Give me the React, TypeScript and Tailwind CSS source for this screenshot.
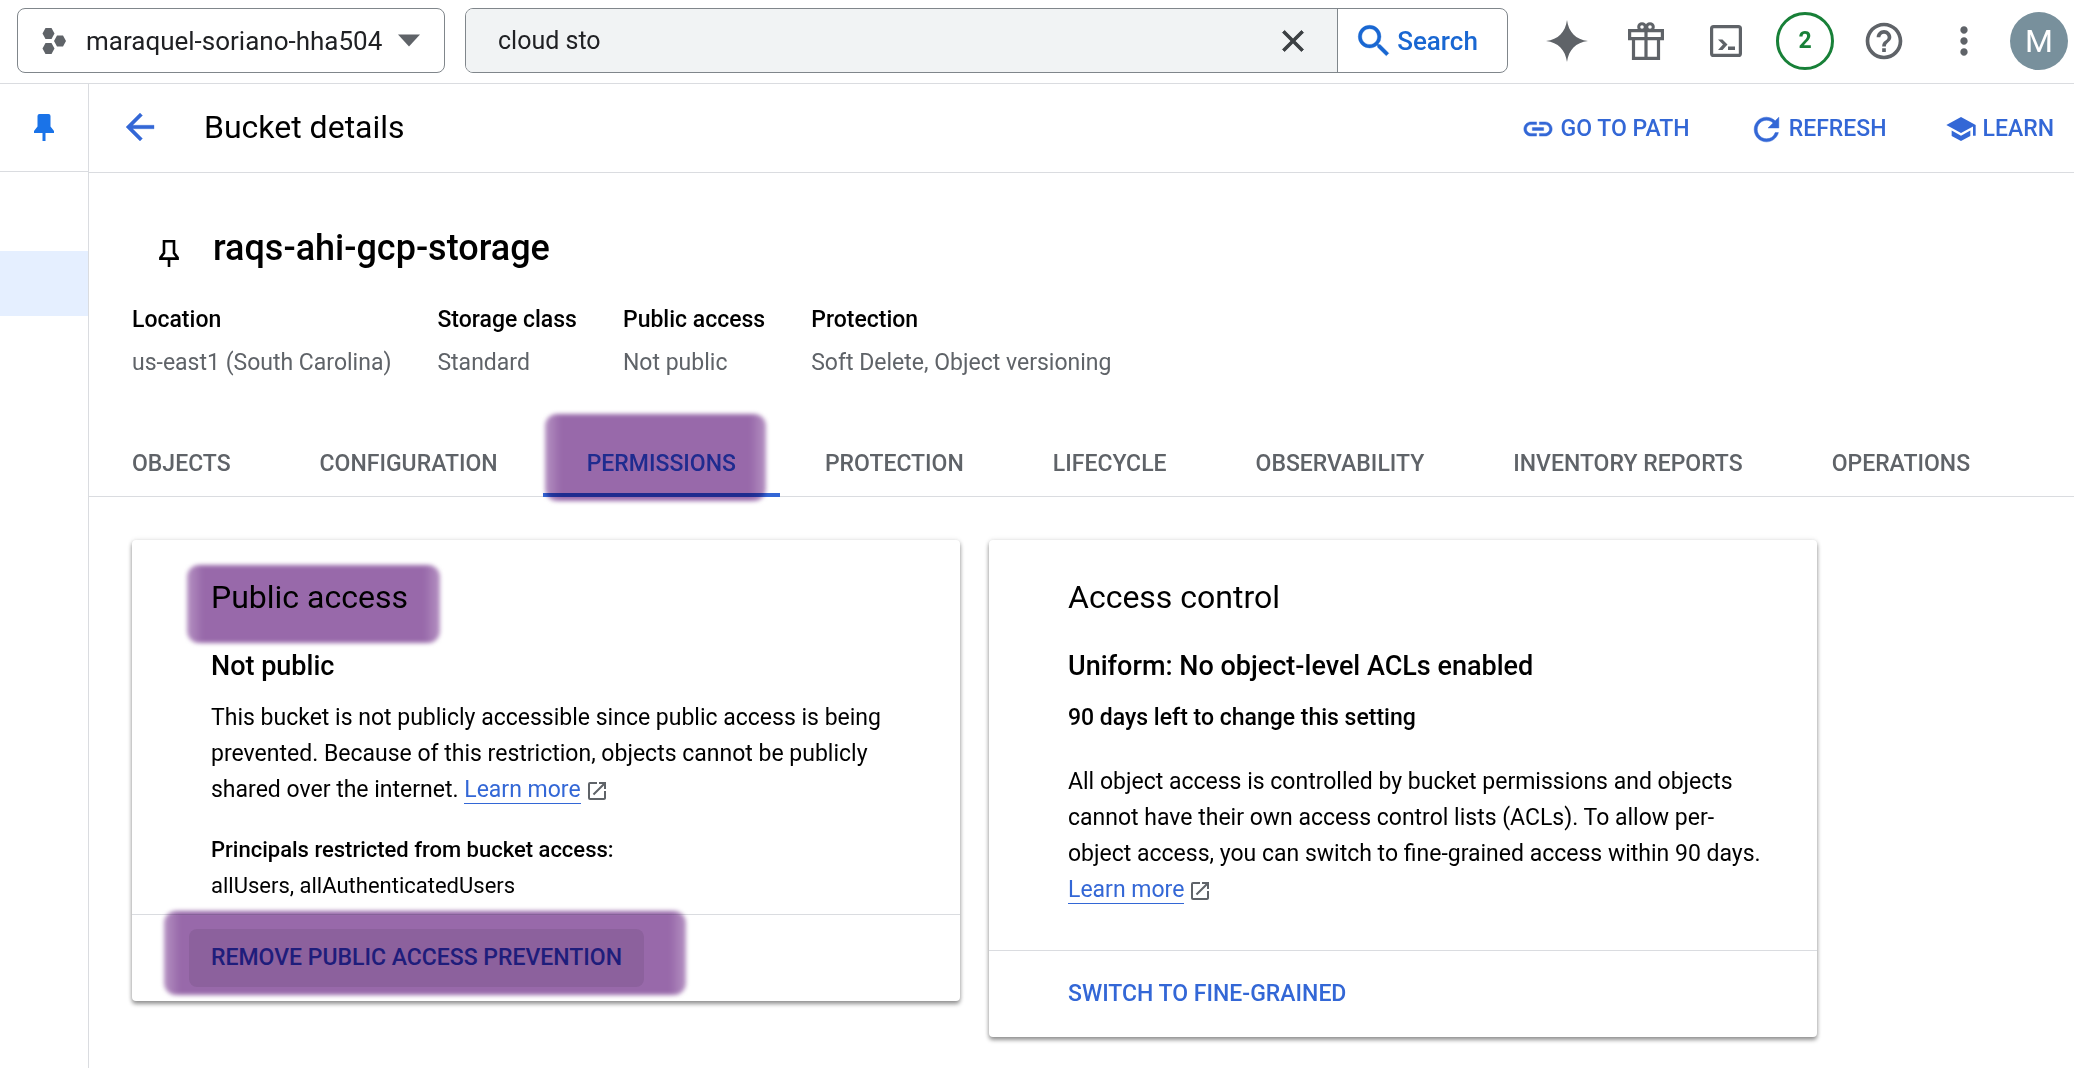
import React from "react";

type IconProps = { className?: string };

const PATHS = {
  back: "M20 11H7.83l5.59-5.59L12 4l-8 8 8 8 1.41-1.41L7.83 13H20v-2z",
  close: "M19 6.410 17.590 5 12 10.590 6.410 5 5 6.410 10.590 12 5 17.590 6.410 19 12 13.410 17.590 19 19 17.590 13.410 12z",
  search:
    "M15.500 14h-.79l-.28-.27A6.471 6.471 0 0 0 16 9.500 6.500 6.500 0 1 0 9.500 16c1.610 0 3.090-.59 4.230-1.570l.27.28v.79l5 4.990L20.490 19l-4.990-5zm-6 0C7.010 14 5 11.990 5 9.500S7.010 5 9.500 5 14 7.010 14 9.500 11.990 14 9.500 14z",
  spark: "M12 0C12.900 7 17 11.100 24 12 17 12.900 12.900 17 12 24 11.100 17 7 12.900 0 12 7 11.100 11.100 7 12 0z",
  help: "M11 18h2v-2h-2v2zm1-16C6.480 2 2 6.480 2 12s4.480 10 10 10 10-4.480 10-10S17.520 2 12 2zm0 18c-4.410 0-8-3.590-8-8s3.590-8 8-8 8 3.590 8 8-3.590 8-8 8zm0-14c-2.210 0-4 1.790-4 4h2c0-1.100.9-2 2-2s2 .9 2 2c0 2-3 1.750-3 5h2c0-2.250 3-2.500 3-5 0-2.210-1.790-4-4-4z",
  more: "M12 8c1.100 0 2-.9 2-2s-.9-2-2-2-2 .9-2 2 .9 2 2 2zm0 2c-1.100 0-2 .9-2 2s.9 2 2 2 2-.9 2-2-.9-2-2-2zm0 6c-1.100 0-2 .9-2 2s.9 2 2 2 2-.9 2-2-.9-2-2-2z",
  link: "M3.900 12c0-1.710 1.390-3.100 3.100-3.100h4V7H7c-2.760 0-5 2.240-5 5s2.240 5 5 5h4v-1.900H7c-1.710 0-3.100-1.390-3.100-3.100zM8 13h8v-2H8v2zm9-6h-4v1.900h4c1.710 0 3.100 1.390 3.100 3.100s-1.390 3.100-3.100 3.100h-4V17h4c2.760 0 5-2.240 5-5s-2.240-5-5-5z",
  refresh:
    "M17.650 6.350A7.958 7.958 0 0 0 12 4c-4.420 0-7.990 3.580-7.990 8s3.570 8 7.990 8c3.730 0 6.840-2.550 7.730-6h-2.080A5.990 5.990 0 0 1 12 18c-3.310 0-6-2.690-6-6s2.690-6 6-6c1.660 0 3.140.69 4.220 1.780L13 11h7V4l-2.350 2.350z",
  school: "M5 13.180v4L12 21l7-3.820v-4L12 17l-7-3.820zM12 3 1 9l11 6 9-4.910V17h2V9L12 3z",
  external:
    "M19 19H5V5h7V3H5a2 2 0 0 0-2 2v14a2 2 0 0 0 2 2h14c1.100 0 2-.9 2-2v-7h-2v7zM14 3v2h3.590l-9.830 9.830 1.410 1.410L19 6.410V10h2V3h-7z",
};

function Icon({ name, className }: IconProps & { name: keyof typeof PATHS }) {
  return (
    <svg viewBox="0 0 24 24" fill="currentColor" aria-hidden="true" className={className}>
      <path d={PATHS[name]} />
    </svg>
  );
}

function PinFilledIcon({ className }: IconProps) {
  return (
    <svg viewBox="0 0 20 27" fill="currentColor" aria-hidden="true" className={className}>
      <path d="M3.500 2q0-2 2-2h9q2 0 2 2v10.500l3.500 4.500v2h-8.500v8h-3v-8H0v-2l3.500-4.500z" />
    </svg>
  );
}

function PinOutlineIcon({ className }: IconProps) {
  return (
    <svg viewBox="0 0 20 27" fill="none" stroke="currentColor" strokeWidth="2.600" aria-hidden="true" className={className}>
      <path d="M5 1.300h10v11.800l3.600 4.500v1H1.400v-1L5 13.100zM10 18.500V27" />
    </svg>
  );
}

function ProjectIcon({ className }: IconProps) {
  return (
    <svg viewBox="0 0 24 26" fill="currentColor" aria-hidden="true" className={className}>
      <path d="M3.500 0h6L12.500 5.500 9.500 11h-6L.5 5.500zM15 7.500h6L24 13l-3 5.500h-6L12 13zM3.500 15h6l3 5.500-3 5.500h-6l-3-5.500z" />
    </svg>
  );
}

function GiftIcon({ className }: IconProps) {
  return (
    <svg viewBox="0 0 36 38" fill="none" stroke="currentColor" strokeWidth="3.200" aria-hidden="true" className={className}>
      <path d="M1.600 8.600h32.800v8H1.600zM5.500 16.600v19.800h25V16.600M18 8v28" />
      <circle cx="14" cy="5" r="3.300" strokeWidth="3" />
      <circle cx="22" cy="5" r="3.300" strokeWidth="3" />
    </svg>
  );
}

function ShellIcon({ className }: IconProps) {
  return (
    <svg viewBox="0 0 32 32" fill="none" stroke="currentColor" strokeWidth="3.200" aria-hidden="true" className={className}>
      <rect x="1.600" y="1.600" width="28.800" height="28.800" rx="2" />
      <path d="M8 14.500h4.500l5 5-5 5.500H8l5-5.500zM18 21.500h7v3.500h-7z" fill="currentColor" stroke="none" />
    </svg>
  );
}

function Highlight({ className }: { className: string }) {
  return (
    <span
      aria-hidden="true"
      className={`pointer-events-none absolute rounded-xl bg-[linear-gradient(90deg,#b592c2,#9869aa_16px,#9869aa_calc(100%-16px),#b592c2)] mix-blend-multiply blur-[2px] ${className}`}
    />
  );
}

const META = [
  { label: "Location", value: "us-east1 (South Carolina)" },
  { label: "Storage class", value: "Standard" },
  { label: "Public access", value: "Not public" },
  { label: "Protection", value: "Soft Delete, Object versioning" },
];

const TABS = [
  "OBJECTS",
  "CONFIGURATION",
  "PERMISSIONS",
  "PROTECTION",
  "LIFECYCLE",
  "OBSERVABILITY",
  "INVENTORY REPORTS",
  "OPERATIONS",
];

function LearnMore() {
  return (
    <a href="#learn-more" className="whitespace-nowrap text-[#3367d6]">
      <span className="border-b border-[#3367d6]">Learn more</span>
      <Icon name="external" className="ml-1 inline size-6 align-[-6px] text-[#5f6368]" />
    </a>
  );
}

const CARD = "rounded bg-white shadow-[0_3px_4px_rgba(0,0,0,0.4),0_0_5px_rgba(0,0,0,0.12)]";

export default function App() {
  return (
    <div className="flex min-h-screen flex-col overflow-x-hidden bg-white font-[Roboto,sans-serif] text-[23px] leading-9 text-black">
      <header className="flex h-[84px] shrink-0 items-center border-b border-[#dadce0] pr-1.5 pb-0.5 pl-[17px]">
        <button className="flex h-[65px] w-[428px] shrink-0 items-center rounded-lg border border-[#80868b] pl-6 text-[26px] text-[#202124]">
          <ProjectIcon className="h-[26px] w-6 text-[#5f6368]" />
          <span className="ml-5">maraquel-soriano-hha504</span>
          <svg viewBox="0 0 20 11" fill="currentColor" aria-hidden="true" className="ml-4 h-[13px] w-[22px] text-[#5f6368]">
            <path d="M0 0h20L10 11z" />
          </svg>
        </button>
        <form className="ml-5 flex h-[65px] min-w-0 flex-1 items-stretch overflow-hidden rounded-lg border border-[#80868b]">
          <input
            type="text"
            aria-label="Search resources"
            defaultValue="cloud sto"
            className="min-w-0 flex-1 bg-[#f1f3f4] pl-8 text-[25px] text-[#202124] outline-none"
          />
          <button type="reset" aria-label="Clear" className="grid w-[88px] place-items-center bg-[#f1f3f4] text-[#3c4043]">
            <Icon name="close" className="size-9 stroke-current stroke-[0.6]" />
          </button>
          <button type="button" className="flex w-[170px] items-center justify-center border-l border-[#80868b] pr-3.5 text-[26px] font-medium text-[#1967d2]">
            <Icon name="search" className="size-[42px] stroke-current stroke-[0.2]" />
            <span className="ml-0.5">Search</span>
          </button>
        </form>
        <nav aria-label="Tools" className="ml-[38px] flex shrink-0 items-center text-[#5f6368]">
          <button aria-label="Assistant" className="w-[42px]"><Icon name="spark" className="size-[42px]" /></button>
          <button aria-label="Offers" className="ml-10"><GiftIcon className="h-[38px] w-9" /></button>
          <button aria-label="Cloud Shell" className="ml-[46px]"><ShellIcon className="size-8" /></button>
          <button aria-label="Notifications" className="ml-[34px] grid size-[58px] place-items-center rounded-full border-[3px] border-[#188038] text-[23px] font-bold text-[#188038]">2</button>
          <button aria-label="Help" className="ml-7"><Icon name="help" className="size-11" /></button>
          <button aria-label="More" className="ml-9"><Icon name="more" className="size-11" /></button>
          <button aria-label="Account" className="ml-6 grid size-[58px] place-items-center rounded-full bg-[#78909c] text-[32px] text-white">M</button>
        </nav>
      </header>

      <div className="flex flex-1">
        <aside className="w-[89px] shrink-0 border-r border-[#dadce0]">
          <div className="flex h-[88px] items-center justify-center border-b border-[#dadce0]">
            <button aria-label="Unpin menu" className="text-[#1a73e8]"><PinFilledIcon className="h-[27px] w-5" /></button>
          </div>
          <div className="mt-[79px] h-[65px] bg-[#e5efff]" />
        </aside>

        <main className="min-w-0 flex-1">
          <div className="flex h-[89px] items-center border-b border-[#dadce0] pr-5 pb-0.5 pl-[30px]">
            <button aria-label="Back" className="text-[#3367d6]"><Icon name="back" className="size-[42px] stroke-current stroke-[0.2]" /></button>
            <h1 className="ml-[43px] text-[32px]">Bucket details</h1>
            <div className="ml-auto flex items-center gap-[58px] pt-1 font-medium text-[#3367d6]">
              <button className="flex items-center gap-1.5"><Icon name="link" className="size-[34px] stroke-current stroke-[0.3]" />GO TO PATH</button>
              <button className="flex items-center gap-1"><Icon name="refresh" className="size-[37px] stroke-current stroke-[0.3]" />REFRESH</button>
              <button className="flex items-center gap-1.5"><Icon name="school" className="size-8" />LEARN</button>
            </div>
          </div>

          <div className="flex items-end pt-[50px] pl-[70px]">
            <button aria-label="Pin bucket" className="mb-1.5"><PinOutlineIcon className="h-[27px] w-5" /></button>
            <h2 className="ml-[34px] text-4xl leading-[50px] font-medium">raqs-ahi-gcp-storage</h2>
          </div>

          <dl className="mt-[29px] flex gap-[46px] pl-[43px]">
            {META.map((m) => (
              <div key={m.label}>
                <dt className="font-medium">{m.label}</dt>
                <dd className="mt-[7px] text-[#5f6368]">{m.value}</dd>
              </div>
            ))}
          </dl>

          <div role="tablist" className="mt-[49px] flex gap-px border-b border-[#dadce0] font-medium whitespace-nowrap text-[#5f6368]">
            {TABS.map((t) =>
              t === "PERMISSIONS" ? (
                <button key={t} role="tab" aria-selected="true" className="relative -mb-px h-[67px] border-b-4 border-[#3367d6] px-11 pt-1 text-[#3367d6]">
                  {t}
                  <Highlight className="-top-4 right-3.5 -bottom-2 left-0.5" />
                </button>
              ) : (
                <button key={t} role="tab" aria-selected="false" className="h-[66px] px-11 pt-0.5 first:pl-[43px]">
                  {t}
                </button>
              ),
            )}
          </div>

          <div className="mx-[43px] mt-[43px] grid max-w-[1685px] grid-cols-2 items-start gap-[29px]">
            <section className={CARD}>
              <div className="pt-[39px] pr-11 pb-2.5 pl-[79px]">
                <h3 className="relative w-fit text-[32px] leading-9">
                  Public access
                  <Highlight className="-top-3.5 -right-8 -bottom-7 -left-6" />
                </h3>
                <p className="mt-[33px] text-[27px] font-medium">Not public</p>
                <p className="mt-4">
                  This bucket is not publicly accessible since public access is being prevented. Because of this
                  restriction, objects cannot be publicly shared over the internet. <LearnMore />
                </p>
                <p className="mt-6 text-[22px] font-medium">Principals restricted from bucket access:</p>
                <p className="text-[22px]">allUsers, allAuthenticatedUsers</p>
              </div>
              <div className="relative border-t border-[#dadce0] py-3.5 pl-[57px]">
                <button className="h-[58px] rounded-lg bg-[#ebebeb] px-[22px] font-medium text-[#3345b8]">
                  REMOVE PUBLIC ACCESS PREVENTION
                </button>
                <Highlight className="-top-1 bottom-1.5 left-8 w-[522px]" />
              </div>
            </section>

            <section className={CARD}>
              <div className="pt-[39px] pr-11 pb-[42px] pl-[79px]">
                <h3 className="text-[32px] leading-9">Access control</h3>
                <p className="mt-[33px] text-[27px] font-medium">Uniform: No object-level ACLs enabled</p>
                <p className="mt-4 font-medium">90 days left to change this setting</p>
                <p className="mt-7">
                  All object access is controlled by bucket permissions and objects cannot have their own access
                  control lists (ACLs). To allow per-object access, you can switch to fine-grained access within 90
                  days. <LearnMore />
                </p>
              </div>
              <div className="border-t border-[#dadce0] py-3.5 pl-[57px]">
                <button className="h-[58px] px-[22px] font-medium text-[#3367d6]">SWITCH TO FINE-GRAINED</button>
              </div>
            </section>
          </div>
        </main>
      </div>
    </div>
  );
}
